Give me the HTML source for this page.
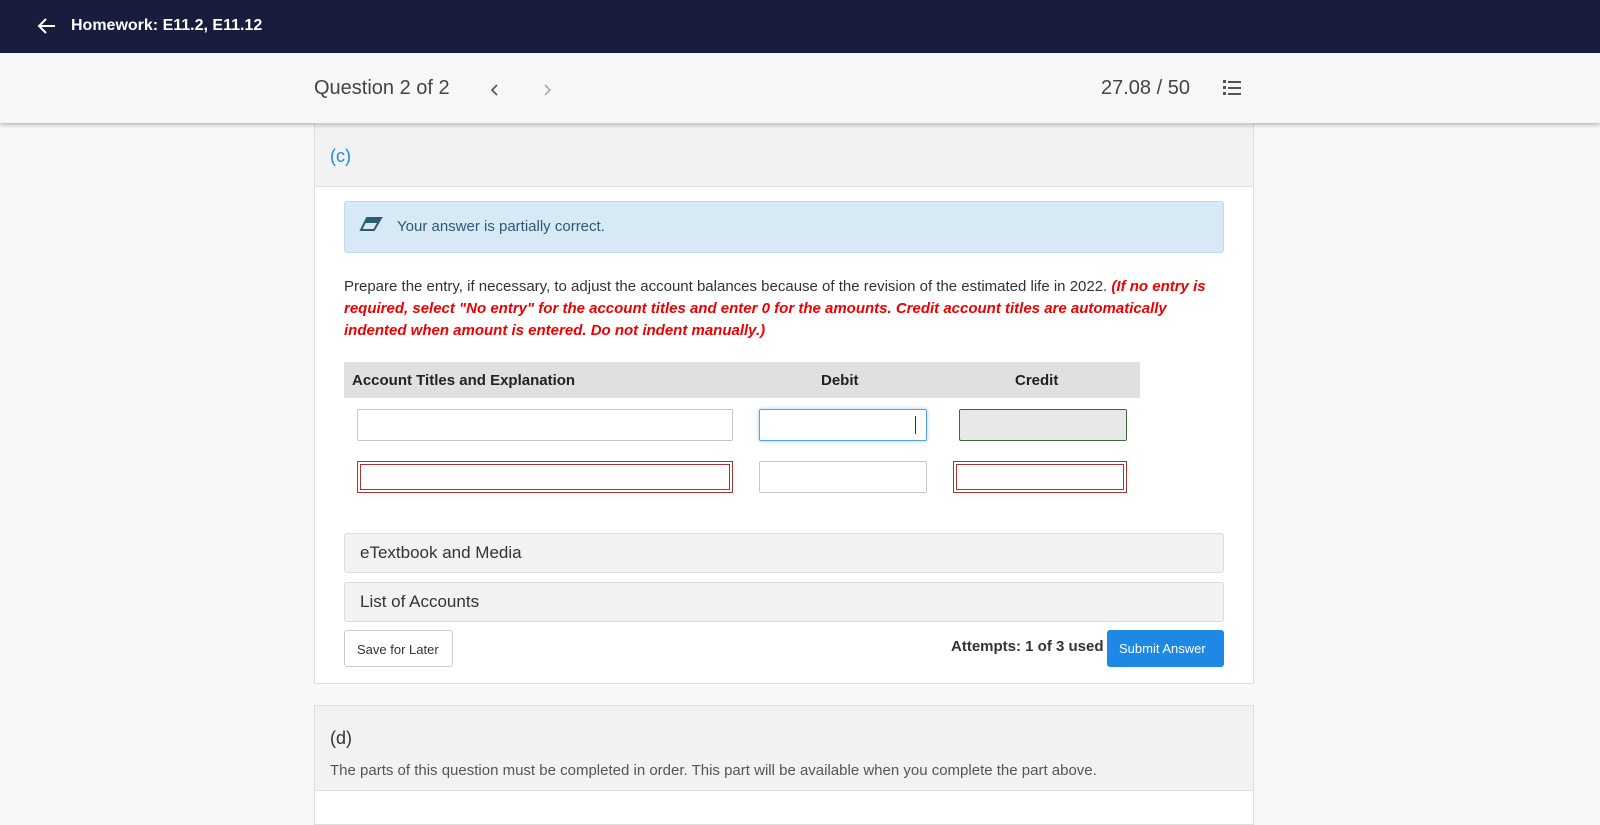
<!DOCTYPE html><html><head><style>
*{box-sizing:border-box;margin:0;padding:0}
body{width:1600px;height:819px;overflow:hidden;background:#f8f8f8;font-family:"Liberation Sans",sans-serif;color:#333;position:relative}
.a{position:absolute}
.top{left:0;top:0;width:1600px;height:53px;background:#181d3d;color:#fff}
.sub{left:0;top:53px;width:1600px;height:70px;background:#f7f7f7;box-shadow:0 2px 4px rgba(0,0,0,.25);z-index:2}
.card{left:314px;top:118px;width:940px;height:566px;background:#fff;border:1px solid #ddd}
.inp{border:1px solid #c6c6c6;border-radius:2px;background:#fff}
.red{border:1px solid #a33;padding:2px;background:#fff}
.red div{border:1px solid #a33;height:100%}
.acc{left:344px;width:880px;height:40px;background:#f2f2f2;border:1px solid #ddd;border-radius:3px;font-size:17px;padding:9px 15px;color:#333}
</style></head><body>
<div class="a top">
<svg class="a" style="left:37px;top:17px" width="20" height="18" viewBox="0 0 20 18"><path d="M18 9H3M9 2L2 9l7 7" stroke="#fff" stroke-width="2" fill="none"/></svg>
<div class="a" style="left:71px;top:17px;font-size:16px;font-weight:bold">Homework: E11.2, E11.12</div>
</div>
<div class="a sub">
<div class="a" style="left:314px;top:24px;font-size:20px;color:#444">Question 2 of 2</div>
<svg class="a" style="left:490px;top:30px" width="10" height="14"><path d="M7 2L2 7l5 5" stroke="#555" stroke-width="1.6" fill="none"/></svg>
<svg class="a" style="left:542px;top:30px" width="10" height="14"><path d="M3 2l5 5-5 5" stroke="#aaa" stroke-width="1.6" fill="none"/></svg>
<div class="a" style="left:1101px;top:24px;font-size:20px;color:#444">27.08 / 50</div>
<svg class="a" style="left:1222px;top:26px" width="20" height="18"><g fill="#555"><rect x="6" y="2" width="13" height="2"/><rect x="6" y="8" width="13" height="2"/><rect x="6" y="14" width="13" height="2"/><rect x="1" y="1" width="3" height="3"/><rect x="1" y="7" width="3" height="3"/><rect x="1" y="13" width="3" height="3"/></g></svg>
</div>
<div class="a card">
<div class="a" style="left:0;top:5px;width:938px;height:63px;background:#f2f2f2;border-bottom:1px solid #ddd"></div>
<div class="a" style="left:15px;top:27px;font-size:18px;color:#1e88e5">(c)</div>
</div>
<div class="a" style="left:344px;top:201px;width:880px;height:52px;background:#d6e9f4;border:1px solid #b9dbe9;border-radius:3px"></div>
<svg class="a" style="left:359px;top:216px" width="24" height="16"><path d="M8 2h14l-7 12H2z" fill="none" stroke="#2f5a73" stroke-width="2"/><path d="M8 2h14l-3 5H5z" fill="#2f5a73"/></svg>
<div class="a" style="left:397px;top:218px;font-size:15px;color:#2c5a74">Your answer is partially correct.</div>
<div class="a" style="left:344px;top:276px;width:885px;font-size:15px;line-height:22px;color:#333">Prepare the entry, if necessary, to adjust the account balances because of the revision of the estimated life in 2022. <b style="color:#e00;font-style:italic">(If no entry is required, select "No entry" for the account titles and enter 0 for the amounts. Credit account titles are automatically indented when amount is entered. Do not indent manually.)</b></div>
<div class="a" style="left:344px;top:362px;width:796px;height:36px;background:#e0e0e0;font-size:15px;font-weight:bold;color:#222">
<span class="a" style="left:8px;top:10px">Account Titles and Explanation</span>
<span class="a" style="left:477px;top:10px">Debit</span>
<span class="a" style="left:671px;top:10px">Credit</span></div>
<div class="a inp" style="left:357px;top:409px;width:376px;height:32px"></div>
<div class="a inp" style="left:759px;top:409px;width:168px;height:32px;border-color:#5c9fe0;box-shadow:0 0 4px rgba(80,150,230,.5)"><div class="a" style="left:155px;top:6px;width:1px;height:18px;background:#333"></div></div>
<div class="a" style="left:959px;top:409px;width:168px;height:32px;background:#e8e8e8;border:1px solid #3a6a3a;border-radius:2px"></div>
<div class="a red" style="left:357px;top:461px;width:376px;height:32px"><div></div></div>
<div class="a inp" style="left:759px;top:461px;width:168px;height:32px"></div>
<div class="a red" style="left:953px;top:461px;width:174px;height:32px"><div></div></div>
<div class="a acc" style="top:533px">eTextbook and Media</div>
<div class="a acc" style="top:582px">List of Accounts</div>
<div class="a" style="left:344px;top:630px;width:109px;height:37px;border:1px solid #ccc;border-radius:3px;background:#fff;font-size:13px;padding:11px 12px;color:#333">Save for Later</div>
<div class="a" style="left:951px;top:638px;font-size:15px;font-weight:bold;color:#333">Attempts: 1 of 3 used</div>
<div class="a" style="left:1107px;top:630px;width:117px;height:37px;border-radius:3px;background:#1e88e5;font-size:13px;padding:11px 12px;color:#fff">Submit Answer</div>
<div class="a" style="left:314px;top:705px;width:940px;height:120px;background:#fff;border:1px solid #ddd">
<div class="a" style="left:0;top:0;width:938px;height:85px;background:#f2f2f2;border-bottom:1px solid #ddd"></div>
<div class="a" style="left:15px;top:22px;font-size:18px;color:#333">(d)</div>
<div class="a" style="left:15px;top:56px;font-size:15px;color:#555">The parts of this question must be completed in order. This part will be available when you complete the part above.</div>
</div>
</body></html>
